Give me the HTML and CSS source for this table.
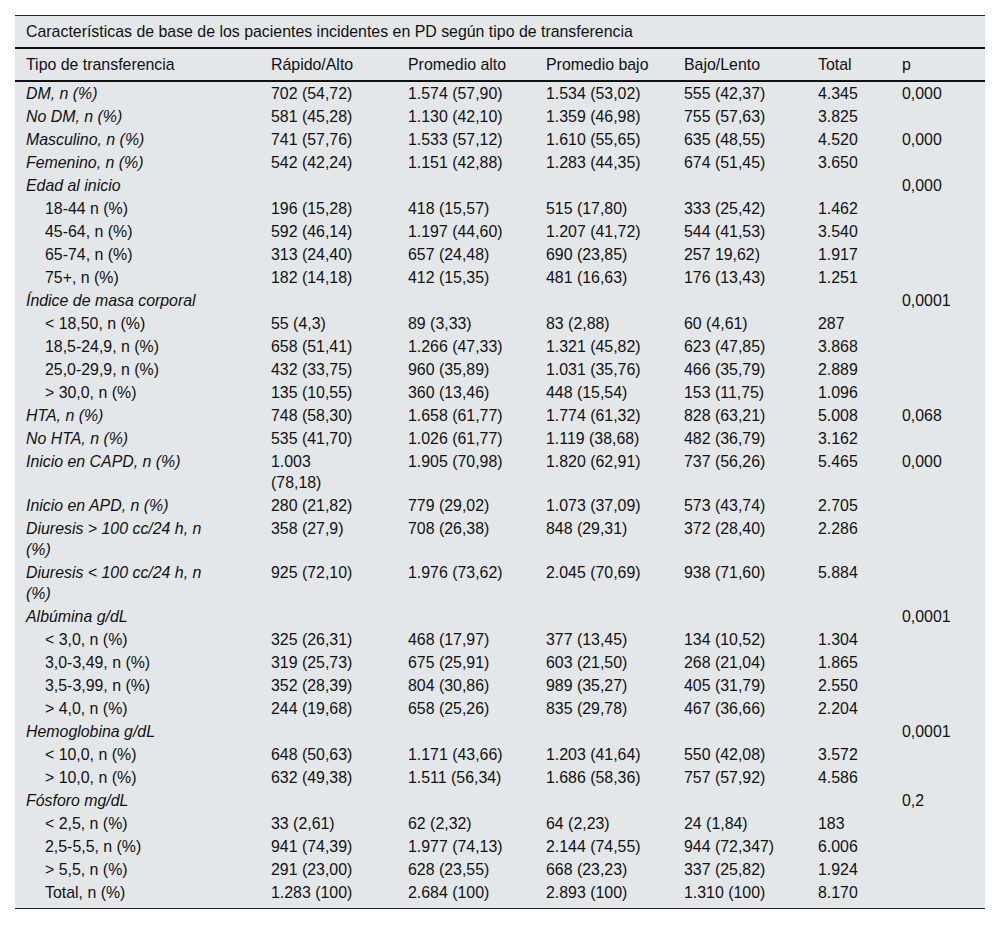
FILE: index.html
```html
<!DOCTYPE html>
<html lang="es">
<head>
<meta charset="utf-8">
<title>Características de base</title>
<link rel="stylesheet" href="styles.css">
</head>
<body>
<div class="table-wrap">
  <div class="caption">Características de base de los pacientes incidentes en PD según tipo de transferencia</div>
  <table class="data">
    <colgroup>
      <col class="c1"><col class="c2"><col class="c3"><col class="c4"><col class="c5"><col class="c6"><col class="c7">
    </colgroup>
    <thead>
      <tr><th>Tipo de transferencia</th><th>Rápido/Alto</th><th>Promedio alto</th><th>Promedio bajo</th><th>Bajo/Lento</th><th>Total</th><th>p</th></tr>
    </thead>
    <tbody>
      <tr><td class="it">DM, n (%)</td><td>702 (54,72)</td><td>1.574 (57,90)</td><td>1.534 (53,02)</td><td>555 (42,37)</td><td>4.345</td><td>0,000</td></tr>
      <tr><td class="it">No DM, n (%)</td><td>581 (45,28)</td><td>1.130 (42,10)</td><td>1.359 (46,98)</td><td>755 (57,63)</td><td>3.825</td><td></td></tr>
      <tr><td class="it">Masculino, n (%)</td><td>741 (57,76)</td><td>1.533 (57,12)</td><td>1.610 (55,65)</td><td>635 (48,55)</td><td>4.520</td><td>0,000</td></tr>
      <tr><td class="it">Femenino, n (%)</td><td>542 (42,24)</td><td>1.151 (42,88)</td><td>1.283 (44,35)</td><td>674 (51,45)</td><td>3.650</td><td></td></tr>
      <tr><td class="it">Edad al inicio</td><td></td><td></td><td></td><td></td><td></td><td>0,000</td></tr>
      <tr><td class="sub">18-44 n (%)</td><td>196 (15,28)</td><td>418 (15,57)</td><td>515 (17,80)</td><td>333 (25,42)</td><td>1.462</td><td></td></tr>
      <tr><td class="sub">45-64, n (%)</td><td>592 (46,14)</td><td>1.197 (44,60)</td><td>1.207 (41,72)</td><td>544 (41,53)</td><td>3.540</td><td></td></tr>
      <tr><td class="sub">65-74, n (%)</td><td>313 (24,40)</td><td>657 (24,48)</td><td>690 (23,85)</td><td>257 19,62)</td><td>1.917</td><td></td></tr>
      <tr><td class="sub">75+, n (%)</td><td>182 (14,18)</td><td>412 (15,35)</td><td>481 (16,63)</td><td>176 (13,43)</td><td>1.251</td><td></td></tr>
      <tr><td class="it">Índice de masa corporal</td><td></td><td></td><td></td><td></td><td></td><td>0,0001</td></tr>
      <tr><td class="sub">&lt; 18,50, n (%)</td><td>55 (4,3)</td><td>89 (3,33)</td><td>83 (2,88)</td><td>60 (4,61)</td><td>287</td><td></td></tr>
      <tr><td class="sub">18,5-24,9, n (%)</td><td>658 (51,41)</td><td>1.266 (47,33)</td><td>1.321 (45,82)</td><td>623 (47,85)</td><td>3.868</td><td></td></tr>
      <tr><td class="sub">25,0-29,9, n (%)</td><td>432 (33,75)</td><td>960 (35,89)</td><td>1.031 (35,76)</td><td>466 (35,79)</td><td>2.889</td><td></td></tr>
      <tr><td class="sub">&gt; 30,0, n (%)</td><td>135 (10,55)</td><td>360 (13,46)</td><td>448 (15,54)</td><td>153 (11,75)</td><td>1.096</td><td></td></tr>
      <tr><td class="it">HTA, n (%)</td><td>748 (58,30)</td><td>1.658 (61,77)</td><td>1.774 (61,32)</td><td>828 (63,21)</td><td>5.008</td><td>0,068</td></tr>
      <tr><td class="it">No HTA, n (%)</td><td>535 (41,70)</td><td>1.026 (61,77)</td><td>1.119 (38,68)</td><td>482 (36,79)</td><td>3.162</td><td></td></tr>
      <tr><td class="it">Inicio en CAPD, n (%)</td><td>1.003<br>(78,18)</td><td>1.905 (70,98)</td><td>1.820 (62,91)</td><td>737 (56,26)</td><td>5.465</td><td>0,000</td></tr>
      <tr><td class="it">Inicio en APD, n (%)</td><td>280 (21,82)</td><td>779 (29,02)</td><td>1.073 (37,09)</td><td>573 (43,74)</td><td>2.705</td><td></td></tr>
      <tr><td class="it">Diuresis &gt; 100 cc/24 h, n<br>(%)</td><td>358 (27,9)</td><td>708 (26,38)</td><td>848 (29,31)</td><td>372 (28,40)</td><td>2.286</td><td></td></tr>
      <tr><td class="it">Diuresis &lt; 100 cc/24 h, n<br>(%)</td><td>925 (72,10)</td><td>1.976 (73,62)</td><td>2.045 (70,69)</td><td>938 (71,60)</td><td>5.884</td><td></td></tr>
      <tr><td class="it">Albúmina g/dL</td><td></td><td></td><td></td><td></td><td></td><td>0,0001</td></tr>
      <tr><td class="sub">&lt; 3,0, n (%)</td><td>325 (26,31)</td><td>468 (17,97)</td><td>377 (13,45)</td><td>134 (10,52)</td><td>1.304</td><td></td></tr>
      <tr><td class="sub">3,0-3,49, n (%)</td><td>319 (25,73)</td><td>675 (25,91)</td><td>603 (21,50)</td><td>268 (21,04)</td><td>1.865</td><td></td></tr>
      <tr><td class="sub">3,5-3,99, n (%)</td><td>352 (28,39)</td><td>804 (30,86)</td><td>989 (35,27)</td><td>405 (31,79)</td><td>2.550</td><td></td></tr>
      <tr><td class="sub">&gt; 4,0, n (%)</td><td>244 (19,68)</td><td>658 (25,26)</td><td>835 (29,78)</td><td>467 (36,66)</td><td>2.204</td><td></td></tr>
      <tr><td class="it">Hemoglobina g/dL</td><td></td><td></td><td></td><td></td><td></td><td>0,0001</td></tr>
      <tr><td class="sub">&lt; 10,0, n (%)</td><td>648 (50,63)</td><td>1.171 (43,66)</td><td>1.203 (41,64)</td><td>550 (42,08)</td><td>3.572</td><td></td></tr>
      <tr><td class="sub">&gt; 10,0, n (%)</td><td>632 (49,38)</td><td>1.511 (56,34)</td><td>1.686 (58,36)</td><td>757 (57,92)</td><td>4.586</td><td></td></tr>
      <tr><td class="it">Fósforo mg/dL</td><td></td><td></td><td></td><td></td><td></td><td>0,2</td></tr>
      <tr><td class="sub">&lt; 2,5, n (%)</td><td>33 (2,61)</td><td>62 (2,32)</td><td>64 (2,23)</td><td>24 (1,84)</td><td>183</td><td></td></tr>
      <tr><td class="sub">2,5-5,5, n (%)</td><td>941 (74,39)</td><td>1.977 (74,13)</td><td>2.144 (74,55)</td><td>944 (72,347)</td><td>6.006</td><td></td></tr>
      <tr><td class="sub">&gt; 5,5, n (%)</td><td>291 (23,00)</td><td>628 (23,55)</td><td>668 (23,23)</td><td>337 (25,82)</td><td>1.924</td><td></td></tr>
      <tr class="last"><td class="sub">Total, n (%)</td><td>1.283 (100)</td><td>2.684 (100)</td><td>2.893 (100)</td><td>1.310 (100)</td><td>8.170</td><td></td></tr>
    </tbody>
  </table>
</div>
</body>
</html>
```

FILE: styles.css
```css
html, body {
  margin: 0;
  padding: 0;
  background: #ffffff;
}

body {
  padding: 15px;
  font-family: "Liberation Sans", Arial, sans-serif;
  font-size: 15.9px;
  color: #111111;
}

.table-wrap {
  width: 970px;
  background: #e4e7ea;
  border-top: 1px solid #222222;
  border-bottom: 1px solid #222222;
}

.caption {
  padding: 5px 11px;
  line-height: 21px;
  border-bottom: 2px solid #111111;
}

.data {
  width: 970px;
  border-collapse: collapse;
  table-layout: fixed;
}

.c1 { width: 245px; }
.c2 { width: 137px; }
.c3 { width: 138px; }
.c4 { width: 138px; }
.c5 { width: 134px; }
.c6 { width: 84px; }
.c7 { width: 94px; }

.data th {
  font-weight: normal;
  text-align: left;
  padding: 5px 11px;
  line-height: 21px;
  border-bottom: 2px solid #111111;
}

.data td {
  padding: 1px 11px;
  line-height: 21px;
  vertical-align: top;
  text-align: left;
}

.data td.it {
  font-style: italic;
}

.data td.sub {
  padding-left: 30px;
}

.data tr.last td {
  padding-bottom: 5px;
}
```
